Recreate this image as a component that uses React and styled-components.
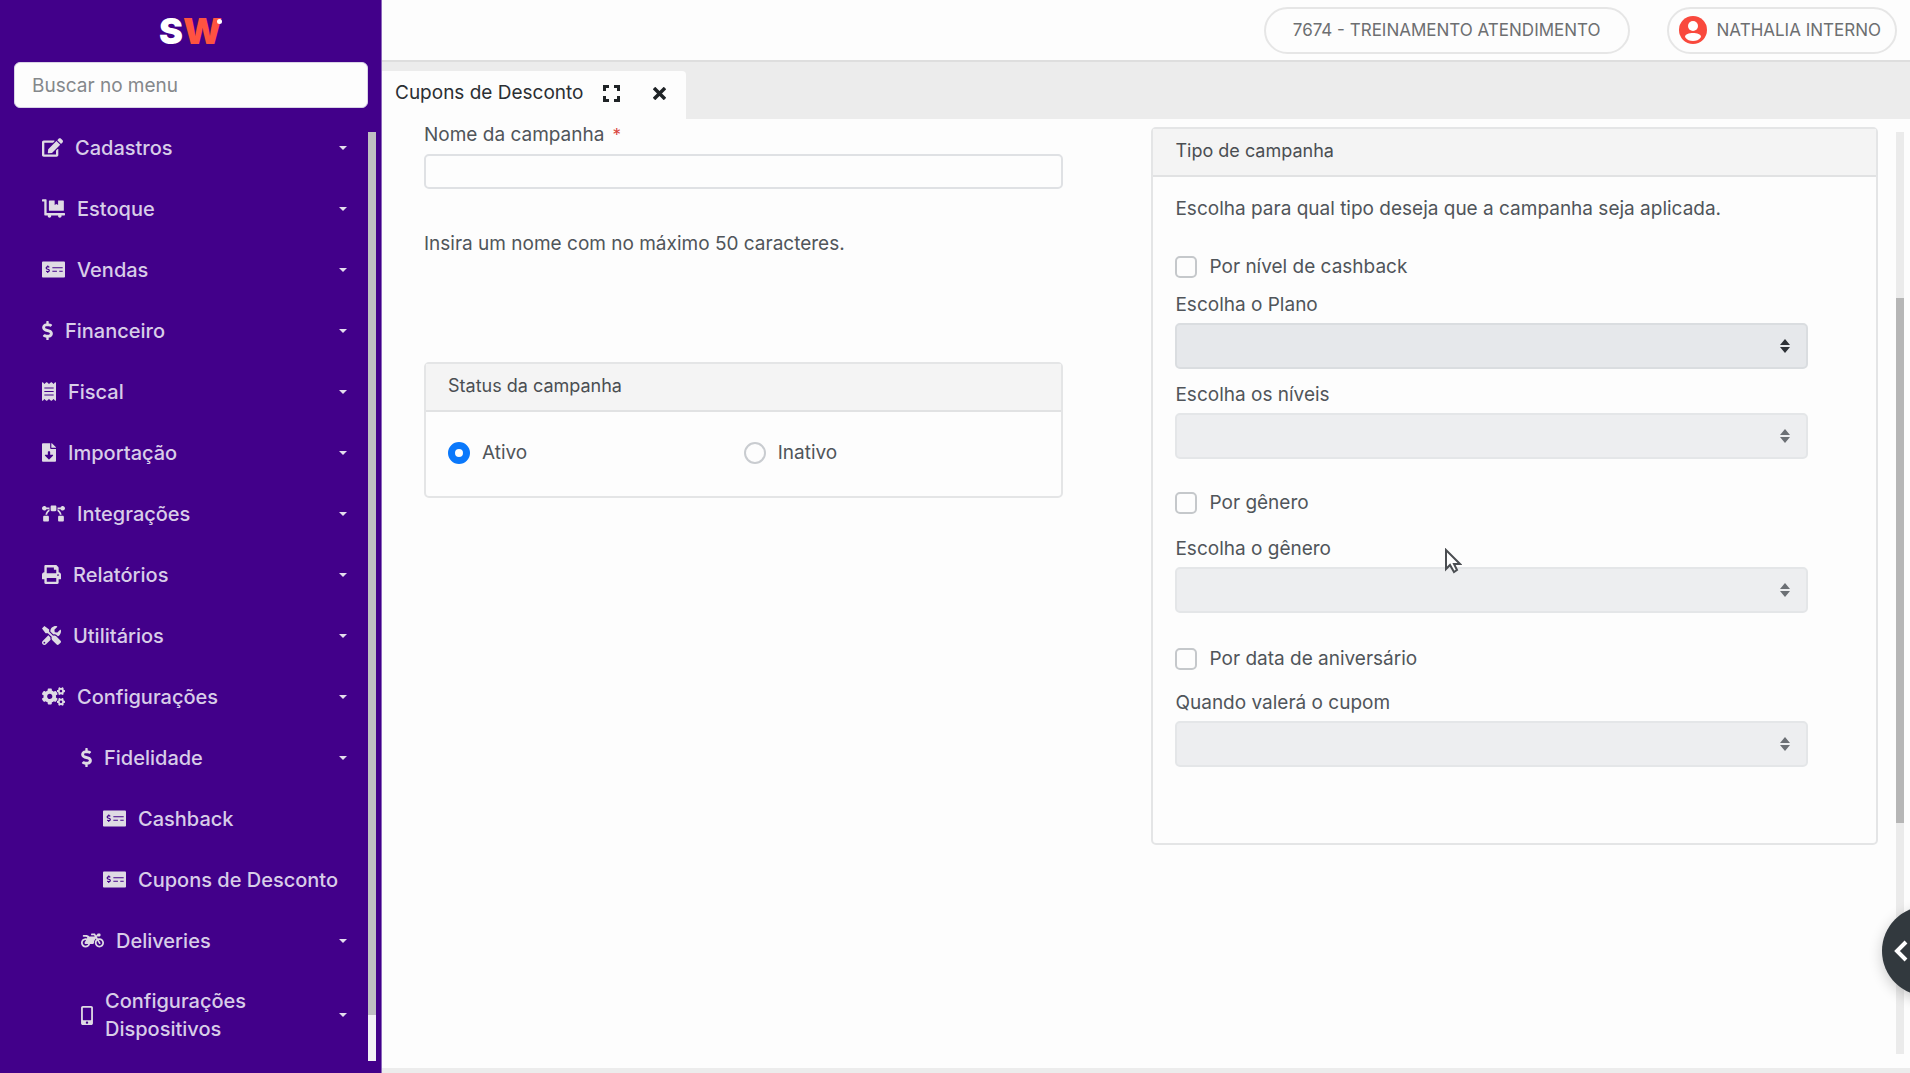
import { useState } from "react";
import styled, { createGlobalStyle } from "styled-components";
import {
    FaBezierCurve,
    FaCogs,
    FaDollarSign,
    FaDollyFlatbed,
    FaEdit,
    FaFileDownload,
    FaMobileAlt,
    FaMoneyCheckAlt,
    FaMotorcycle,
    FaPrint,
    FaReceipt,
    FaTools,
} from "react-icons/fa";

const GlobalStyle = createGlobalStyle`
    * {
        box-sizing: border-box;
    }
    body {
        margin: 0;
        background: #fdfdfd;
        color: #50555a;
        font-family: Inter, "Liberation Sans", sans-serif;
        font-size: 19px;
        line-height: 24px;
    }
    button, input, select {
        font: inherit;
        color: inherit;
        margin: 0;
    }
`;

const Page = styled.div`
    display: flex;
    min-height: 100vh;
    overflow: hidden;
`;

const Sidebar = styled.aside`
    display: flex;
    flex-direction: column;
    flex: none;
    width: 382px;
    background: #42008a;
    border-right: 1px solid #8d68bd;
`;

const Logo = styled.a`
    position: relative;
    align-self: center;
    height: 62px;
    color: #fff;
    font-size: 36px;
    font-weight: 900;
    line-height: 62px;
    text-decoration: none;
`;

const LogoAccent = styled.span`
    color: #ff5340;
`;

const LogoDot = styled.span`
    position: absolute;
    top: 19px;
    right: 0;
    width: 5px;
    height: 5px;
    border-radius: 50%;
    background: #fff;
`;

const MenuSearch = styled.input`
    height: 46px;
    margin: 0 13px 0 14px;
    padding: 0 17px;
    border: 1px solid #d9d3e6;
    border-radius: 6px;
    background: #fdfdfd;
    &::placeholder {
        color: #85888b;
        opacity: 1;
    }
`;

const MenuArea = styled.div`
    display: flex;
    flex: 1;
`;

const Menu = styled.nav`
    flex: 1;
    padding-top: 9px;
`;

const indents = [42, 81, 103];

const MenuItem = styled.button`
    display: flex;
    align-items: center;
    gap: 12px;
    width: 100%;
    min-height: 61px;
    padding: 16px 21px 16px ${props => indents[props.$level]}px;
    border: 0;
    background: none;
    color: #d8cde8;
    font-size: 20px;
    font-weight: 500;
    line-height: 28px;
    text-align: left;
    cursor: pointer;
    svg {
        flex: none;
        width: ${props => props.$iconWidth}px;
        height: 19px;
        color: #dfdbe4;
    }
`;

const MenuLabel = styled.span`
    flex: 1;
`;

const Caret = styled.span`
    border: 4px solid transparent;
    border-top-color: #e4deee;
    border-bottom: 0;
`;

const Track = styled.div`
    flex: none;
    width: 8px;
    margin: ${props => props.$margin};
    background: ${props => props.$color};
`;

const Thumb = styled.div`
    height: ${props => props.$size};
    background: ${props => props.$color};
`;

const TrackSpace = styled.div`
    height: ${props => props.$size};
`;

const Main = styled.div`
    display: flex;
    flex-direction: column;
    flex: 1;
    min-width: 0;
    border-bottom: 5px solid #ececec;
`;

const Header = styled.header`
    display: flex;
    align-items: center;
    justify-content: flex-end;
    gap: 37px;
    height: 62px;
    padding-right: 13px;
    border-bottom: 2px solid #dedede;
`;

const Pill = styled.button`
    display: flex;
    align-items: center;
    gap: 10px;
    height: 47px;
    padding: ${props => props.$user ? "0 14px 0 10px" : "0 27px"};
    border: 2px solid #e6e6e6;
    border-radius: 24px;
    background: #fdfdfd;
    color: #6d6f71;
    font-size: 17px;
    white-space: nowrap;
    cursor: pointer;
`;

const TabBar = styled.div`
    display: flex;
    align-items: flex-end;
    height: 57px;
    background: #ececec;
`;

const Tab = styled.div`
    display: flex;
    align-items: center;
    height: 48px;
    padding: 0 14px 4px 13px;
    border-top-right-radius: 4px;
    background: #fdfdfd;
    color: #2b2f33;
`;

const TabButton = styled.button`
    display: flex;
    align-items: center;
    justify-content: center;
    width: 24px;
    height: 24px;
    margin-left: ${props => props.$gap}px;
    padding: 0;
    border: 0;
    background: none;
    color: #1f2326;
    cursor: pointer;
`;

const Workspace = styled.div`
    display: flex;
    flex: 1;
`;

const Form = styled.form`
    display: grid;
    grid-template-columns: 639fr 726fr;
    align-items: start;
    gap: 88px;
    flex: 1;
    padding: 4px 18px 0 42px;
`;

const FormColumn = styled.div`
    padding-top: ${props => props.$top || 0}px;
`;

const FieldLabel = styled.label`
    display: block;
    margin-top: ${props => props.$top || 0}px;
`;

const Required = styled.span`
    margin-left: 8px;
    color: #d9453c;
    font-size: 17px;
`;

const TextInput = styled.input`
    display: block;
    width: 100%;
    height: 35px;
    margin-top: 7px;
    padding: 0 12px;
    border: 2px solid #dfe1e4;
    border-radius: 5px;
    background: #fdfdfd;
`;

const Help = styled.p`
    margin: 43px 0 106px;
`;

const Card = styled.section`
    position: relative;
    border: 2px solid #e4e5e6;
    border-radius: 5px;
`;

const CardTitle = styled.h2`
    margin: 0;
    padding: 10px 22px 12px;
    border-bottom: 2px solid #e1e2e3;
    background: #f4f4f4;
    color: #4a4e52;
    font-size: 18px;
    font-weight: 400;
    line-height: 24px;
`;

const StatusOptions = styled.div`
    display: grid;
    grid-template-columns: 1fr 1fr;
    padding: 29px 22px 31px;
`;

const CampaignBody = styled.div`
    padding: 20px 68px 76px 22px;
`;

const Intro = styled.p`
    margin: 0;
`;

const CheckLabel = styled.label`
    display: flex;
    align-items: center;
    gap: 12px;
    margin-top: ${props => props.$top || 0}px;
`;

const Radio = styled.input`
    appearance: none;
    width: 22px;
    height: 22px;
    border: 2px solid #c9ccd0;
    border-radius: 50%;
    background: #fdfdfd;
    &:checked {
        border: 7px solid #0a78fb;
    }
`;

const Checkbox = styled.input`
    appearance: none;
    width: 22px;
    height: 22px;
    border: 2px solid #c5c8cb;
    border-radius: 5px;
    background: #fdfdfd;
    &:checked {
        background: #0a78fb;
    }
`;

const SelectWrapper = styled.div`
    position: relative;
    margin-top: 6px;
    svg {
        position: absolute;
        top: 16px;
        right: 18px;
        pointer-events: none;
        color: ${props => props.$dark ? "#2d3136" : "#6c7075"};
    }
`;

const Select = styled.select`
    display: block;
    appearance: none;
    width: 100%;
    height: 46px;
    padding: 0 40px 0 14px;
    border: 2px solid ${props => props.$dark ? "#dadde0" : "#e4e6e8"};
    border-radius: 5px;
    background: ${props => props.$dark ? "#e6e8eb" : "#edeef0"};
    opacity: 1;
`;

const Pointer = styled.svg`
    position: absolute;
    top: 419px;
    left: 40%;
    pointer-events: none;
`;

const SupportButton = styled.button`
    position: fixed;
    right: -62px;
    bottom: 77px;
    display: flex;
    align-items: center;
    width: 90px;
    height: 90px;
    padding: 0 0 0 12px;
    border: 0;
    border-radius: 50%;
    background: #32393e;
    box-shadow: 0 4px 14px rgba(0, 0, 0, 0.2);
    color: #fff;
    cursor: pointer;
`;

const menu = [
    { label: "Cadastros", icon: FaEdit, iconWidth: 21, level: 0 },
    { label: "Estoque", icon: FaDollyFlatbed, iconWidth: 23, level: 0 },
    { label: "Vendas", icon: FaMoneyCheckAlt, iconWidth: 23, level: 0 },
    { label: "Financeiro", icon: FaDollarSign, iconWidth: 11, level: 0 },
    { label: "Fiscal", icon: FaReceipt, iconWidth: 14, level: 0 },
    { label: "Importação", icon: FaFileDownload, iconWidth: 14, level: 0 },
    { label: "Integrações", icon: FaBezierCurve, iconWidth: 23, level: 0 },
    { label: "Relatórios", icon: FaPrint, iconWidth: 19, level: 0 },
    { label: "Utilitários", icon: FaTools, iconWidth: 19, level: 0 },
    { label: "Configurações", icon: FaCogs, iconWidth: 23, level: 0 },
    { label: "Fidelidade", icon: FaDollarSign, iconWidth: 11, level: 1 },
    { label: "Cashback", icon: FaMoneyCheckAlt, iconWidth: 23, level: 2, leaf: true },
    { label: "Cupons de Desconto", icon: FaMoneyCheckAlt, iconWidth: 23, level: 2, leaf: true },
    { label: "Deliveries", icon: FaMotorcycle, iconWidth: 23, level: 1 },
    { label: "Configurações Dispositivos", icon: FaMobileAlt, iconWidth: 12, level: 1 },
];

function SelectField({ id, label, top, dark }) {
    return (
        <>
            <FieldLabel htmlFor={id} $top={top}>{label}</FieldLabel>
            <SelectWrapper $dark={dark}>
                <Select id={id} $dark={dark} disabled />
                <svg width="10" height="14" viewBox="0 0 10 14" fill="currentColor">
                    <path d="M5 0 10 6H0zM5 14 0 8h10z" />
                </svg>
            </SelectWrapper>
        </>
    );
}

function UserIcon() {
    return (
        <svg width="28" height="28" viewBox="0 0 28 28">
            <circle cx="14" cy="14" r="14" fill="#f9493d" />
            <circle cx="14" cy="10" r="5" fill="#fff" />
            <path d="M6 21c0-3 4-4 8-4s8 1 8 4c-2 3-5 4-8 4s-6-1-8-4z" fill="#fff" />
        </svg>
    );
}

export default function App() {
    const [status, setStatus] = useState("ativo");

    return (
        <>
            <GlobalStyle />
            <Page>
                <Sidebar>
                    <Logo href="#">
                        S<LogoAccent>W</LogoAccent>
                        <LogoDot />
                    </Logo>
                    <MenuSearch type="text" placeholder="Buscar no menu" aria-label="Buscar no menu" />
                    <MenuArea>
                        <Menu>
                            {menu.map(({ label, icon: Icon, iconWidth, level, leaf }, index) => (
                                <MenuItem key={index} type="button" $level={level} $iconWidth={iconWidth}>
                                    <Icon />
                                    <MenuLabel>{label}</MenuLabel>
                                    {!leaf && <Caret />}
                                </MenuItem>
                            ))}
                        </Menu>
                        <Track $margin="24px 5px 12px 0" $color="#f2f0f6">
                            <Thumb $size="95%" $color="#bfbfc2" />
                        </Track>
                    </MenuArea>
                </Sidebar>

                <Main>
                    <Header>
                        <Pill type="button">7674 - TREINAMENTO ATENDIMENTO</Pill>
                        <Pill type="button" $user>
                            <UserIcon />
                            NATHALIA INTERNO
                        </Pill>
                    </Header>

                    <TabBar>
                        <Tab>
                            Cupons de Desconto
                            <TabButton type="button" aria-label="Tela cheia" $gap={16}>
                                <svg width="17" height="17" viewBox="0 0 17 17" fill="none" stroke="currentColor" strokeWidth="3">
                                    <path d="M1.5 6V1.5H6M11 1.5h4.500V6M15.500 11v4.500H11M6 15.500H1.500V11" />
                                </svg>
                            </TabButton>
                            <TabButton type="button" aria-label="Fechar" $gap={24}>
                                <svg width="13" height="13" viewBox="0 0 13 13" fill="none" stroke="currentColor" strokeWidth="3.500">
                                    <path d="M1 1l11 11M12 1 1 12" />
                                </svg>
                            </TabButton>
                        </Tab>
                    </TabBar>

                    <Workspace>
                        <Form>
                            <FormColumn>
                                <FieldLabel htmlFor="nome">
                                    Nome da campanha<Required>*</Required>
                                </FieldLabel>
                                <TextInput id="nome" type="text" maxLength={50} />
                                <Help>Insira um nome com no máximo 50 caracteres.</Help>
                                <Card>
                                    <CardTitle>Status da campanha</CardTitle>
                                    <StatusOptions>
                                        <CheckLabel>
                                            <Radio
                                                type="radio"
                                                name="status"
                                                checked={status === "ativo"}
                                                onChange={() => setStatus("ativo")}
                                            />
                                            Ativo
                                        </CheckLabel>
                                        <CheckLabel>
                                            <Radio
                                                type="radio"
                                                name="status"
                                                checked={status === "inativo"}
                                                onChange={() => setStatus("inativo")}
                                            />
                                            Inativo
                                        </CheckLabel>
                                    </StatusOptions>
                                </Card>
                            </FormColumn>

                            <FormColumn $top={4}>
                                <Card>
                                    <CardTitle>Tipo de campanha</CardTitle>
                                    <CampaignBody>
                                        <Intro>Escolha para qual tipo deseja que a campanha seja aplicada.</Intro>
                                        <CheckLabel $top={34}>
                                            <Checkbox type="checkbox" />
                                            Por nível de cashback
                                        </CheckLabel>
                                        <SelectField id="plano" label="Escolha o Plano" top={14} dark />
                                        <SelectField id="niveis" label="Escolha os níveis" top={14} />
                                        <CheckLabel $top={32}>
                                            <Checkbox type="checkbox" />
                                            Por gênero
                                        </CheckLabel>
                                        <SelectField id="genero" label="Escolha o gênero" top={22} />
                                        <CheckLabel $top={34}>
                                            <Checkbox type="checkbox" />
                                            Por data de aniversário
                                        </CheckLabel>
                                        <SelectField id="validade" label="Quando valerá o cupom" top={20} />
                                    </CampaignBody>
                                    <Pointer width="20" height="26" viewBox="0 0 20 26">
                                        <path
                                            d="M4 2v19l4-4 4 7 3-2-3-6h6z"
                                            fill="#fff"
                                            stroke="#4b4e52"
                                            strokeWidth="2"
                                        />
                                    </Pointer>
                                </Card>
                            </FormColumn>
                        </Form>
                        <Track $margin="13px 6px 14px 0" $color="#ebebeb">
                            <TrackSpace $size="18%" />
                            <Thumb $size="57%" $color="#b6b6b6" />
                        </Track>
                    </Workspace>
                </Main>

                <SupportButton type="button" aria-label="Abrir painel">
                    <svg width="14" height="22" viewBox="0 0 14 22" fill="none" stroke="currentColor" strokeWidth="4">
                        <path d="M12 2 3 11l9 9" />
                    </svg>
                </SupportButton>
            </Page>
        </>
    );
}
